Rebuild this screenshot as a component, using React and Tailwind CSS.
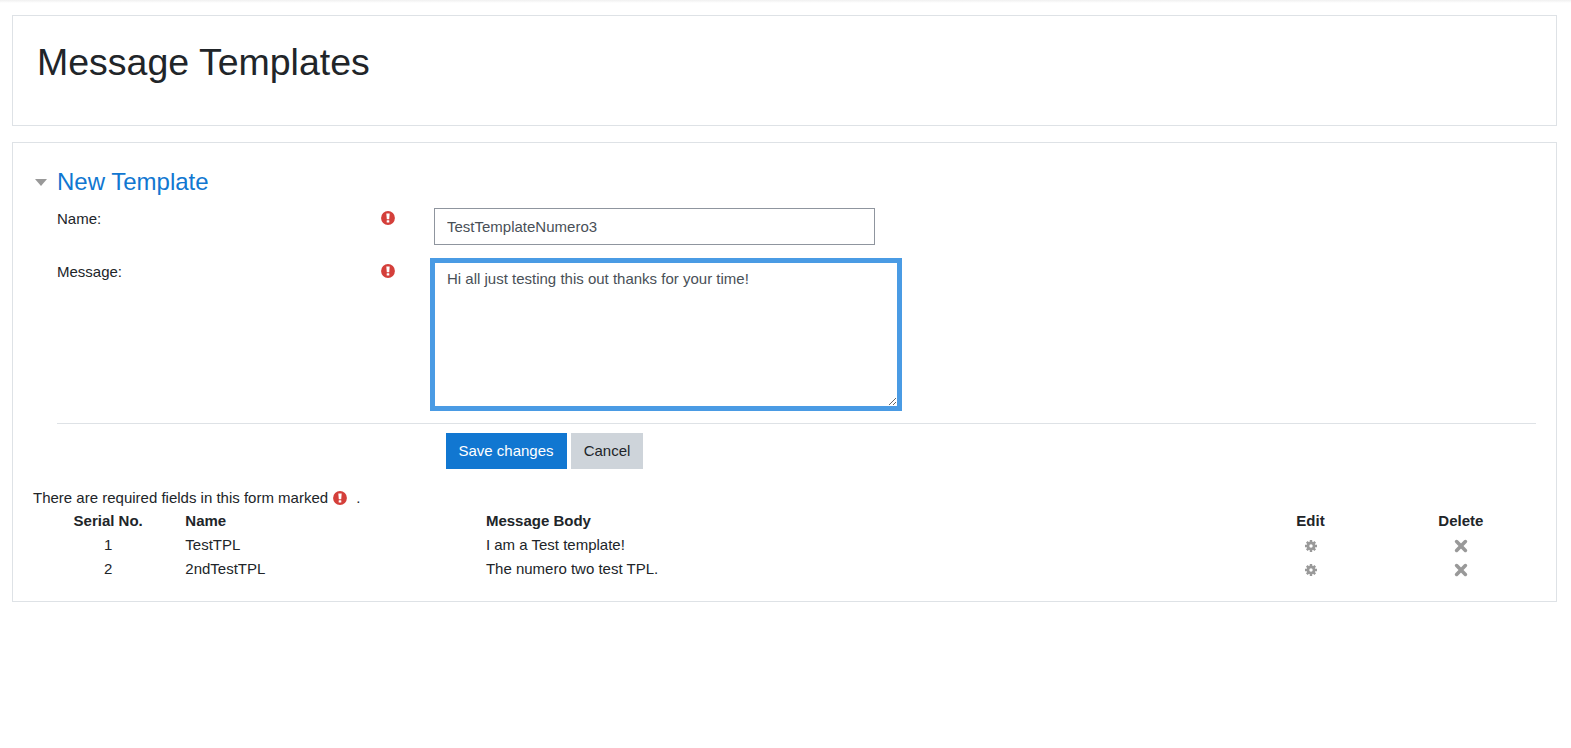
import React from 'react';

const templates = [
  { id: 1, name: 'TestTPL', body: 'I am a Test template!' },
  { id: 2, name: '2ndTestTPL', body: 'The numero two test TPL.' },
];

function Required({ className = '' }) {
  return (
    <svg viewBox="0 0 15 15" className={`h-[14px] w-[14px] ${className}`}>
      <circle cx="7.5" cy="7.5" r="7.4" fill="#d43f3a" />
      <path d="M5.7 2.6h3.6l-.5 6.2H6.2z" fill="#fff" />
      <rect x="6.1" y="9.8" width="2.8" height="2.6" rx="0.4" fill="#fff" />
    </svg>
  );
}

// chunky little gear, the package ones have thinner teeth
function Gear() {
  return (
    <svg viewBox="0 0 14 14" className="mx-auto mt-[2px] block h-[14px] w-[14px]">
      <g stroke="#999" strokeWidth="2.4">
        <path d="M7 1v12M1 7h12M2.8 2.8l8.4 8.4M11.2 2.8l-8.4 8.4" />
      </g>
      <circle cx="7" cy="7" r="4.4" fill="#999" />
      <circle cx="7" cy="7" r="1.7" fill="#fff" />
    </svg>
  );
}

function Cross() {
  return (
    <svg viewBox="0 0 14 14" className="mx-auto mt-[2px] block h-[14px] w-[14px]">
      <path d="M2.6 2.6l8.8 8.8M11.4 2.6l-8.8 8.8" stroke="#999" strokeWidth="3.6" strokeLinecap="round" />
    </svg>
  );
}

export default function App() {
  return (
    <div className="min-h-[748px] bg-white font-['Liberation_Sans',Arial,sans-serif] text-[15px] leading-[22.5px] text-[#212529]">
      {/* shadow of the hidden navbar */}
      <div className="h-[3px] bg-gradient-to-b from-[#f0f0f0] to-white" />

      <div className="mt-[12px] ml-[12px] w-[1545px]">
        {/* Page header */}
        <div className="h-[111px] border border-[#dee2e6] pl-[24px] pt-[24px]">
          <h1 className="text-[37.5px] leading-[45px] font-normal">Message Templates</h1>
        </div>

        {/* Main card */}
        <div className="mt-[16px] h-[460px] border border-[#dee2e6] pt-[22px] pl-[20px] pr-[20px]">
          <div className="flex items-center h-[34px]">
            <span className="ml-[2px] mr-[10px] h-0 w-0 border-x-[6.5px] border-t-[7px] border-x-transparent border-t-[#999]" />
            <h3 className="text-[24px] leading-[34px] font-normal text-[#1177d1]">New Template</h3>
          </div>

          <form className="ml-[24px] mt-[9px]">
            <div className="flex h-[37px]">
              <label className="w-[324px] leading-[21px]">Name:</label>
              <div className="w-[53px] pt-[3px]">
                <Required />
              </div>
              <input
                type="text"
                defaultValue="TestTemplateNumero3"
                className="h-[37px] w-[441px] border border-[#8f959e] px-[12px] text-[#495057] outline-none"
              />
            </div>

            <div className="mt-[13px] flex">
              <label className="w-[324px] pt-[3px] leading-[21px]">Message:</label>
              <div className="w-[49px] pt-[6px]">
                <Required />
              </div>
              <textarea
                defaultValue="Hi all just testing this out thanks for your time!"
                className="block h-[153px] w-[472px] border-[5px] border-[#4a9be4] px-[12px] py-[5px] text-[#495057] outline-none"
              />
            </div>

            <div className="mt-[12px] flex gap-[4px] border-t border-[#dee2e6] pt-[9px] pl-[389px]">
              <button type="button" className="h-[36px] w-[121px] bg-[#1177d1] pr-px text-white">
                Save changes
              </button>
              <button type="button" className="h-[36px] w-[72px] bg-[#ced4da]">
                Cancel
              </button>
            </div>
          </form>

          <div className="mt-[18px] flex h-[22px] items-center">
            There are required fields in this form marked
            <Required className="ml-[5px] mr-[9px] mb-[1px]" />.
          </div>

          <table className="w-[1503px] table-fixed">
            <thead>
              <tr className="h-[24px]">
                <th className="w-[10%] text-center font-bold">Serial No.</th>
                <th className="w-[20%] pl-[2px] text-left font-bold">Name</th>
                <th className="w-[50%] pl-[2px] text-left font-bold">Message Body</th>
                <th className="w-[10%] text-center font-bold">Edit</th>
                <th className="w-[10%] text-center font-bold">Delete</th>
              </tr>
            </thead>
            <tbody>
              {templates.map((t) => (
                <tr key={t.id} className="h-[24px]">
                  <td className="text-center">{t.id}</td>
                  <td className="pl-[2px]">{t.name}</td>
                  <td className="pl-[2px]">{t.body}</td>
                  <td>
                    <Gear />
                  </td>
                  <td>
                    <Cross />
                  </td>
                </tr>
              ))}
            </tbody>
          </table>
        </div>
      </div>
    </div>
  );
}
